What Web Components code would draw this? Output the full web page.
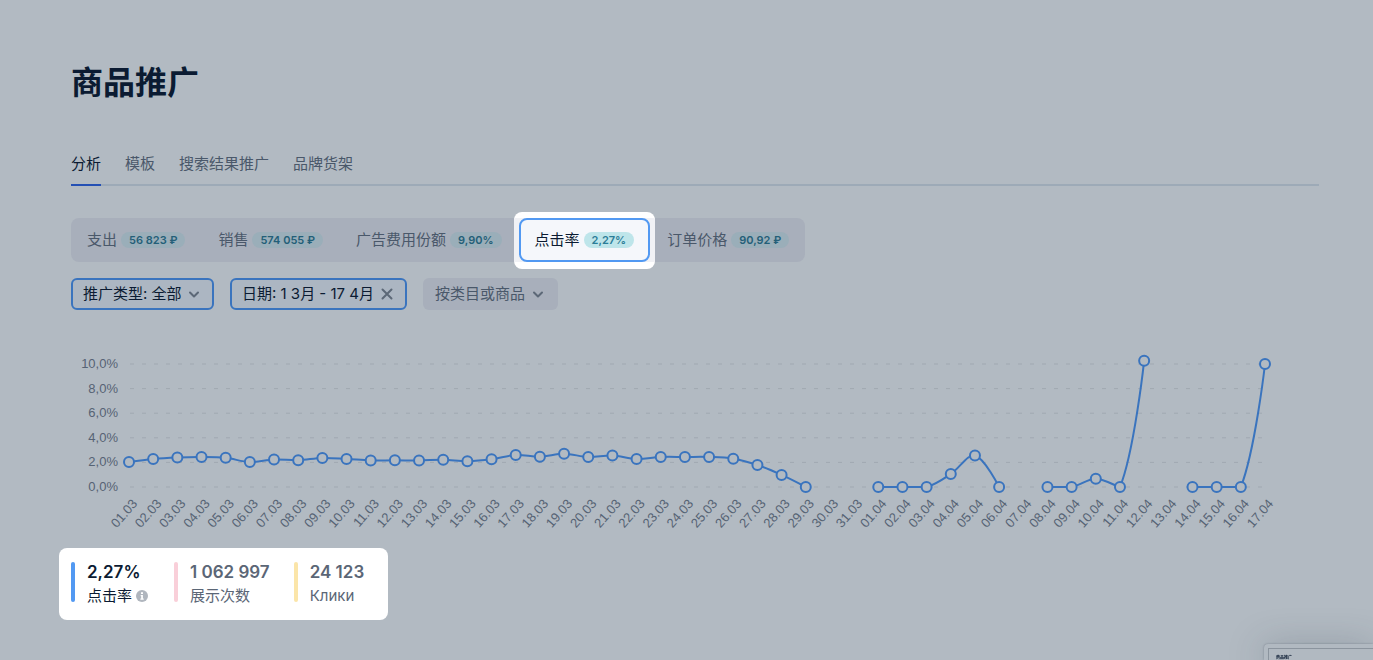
<!DOCTYPE html>
<html lang="zh">
<head>
<meta charset="utf-8">
<meta name="viewport" content="width=device-width, initial-scale=1">
<title>商品推广</title>
<style>
  :root {
    --page: #b2bac2;
    --ink: #0b1b32;
    --muted: #4a586a;
    --panel: #a8afbb;
    --blue: #3a74be;
    --bright: #5299f2;
  }
  html { background: var(--page); }
  body {
    margin: 0;
    background: var(--page);
    color: var(--ink);
    font: 15px/20px Inter, "Noto Sans CJK SC", sans-serif;
  }
</style>
</head>
<body>
<promo-page></promo-page>

<script>
const define = (name, html, setup) => {
  const template = document.createElement('template');
  template.innerHTML = html;
  customElements.define(name, class extends HTMLElement {
    connectedCallback() {
      if (this.shadowRoot) return;
      const root = this.attachShadow({ mode: 'open' });
      root.append(template.content.cloneNode(true));
      if (setup) setup(this, root);
    }
  });
};

define('nav-tab', `
  <style>
    :host { display: block; }
    a { display: block; padding: 0 0 10px; color: var(--muted); text-decoration: none; border-bottom: 2px solid transparent; }
    :host([current]) a { color: var(--ink); border-color: #2450b4; }
  </style>
  <a href="#"><slot></slot></a>
`, (host, root) => {
  if (host.hasAttribute('current')) root.querySelector('a').setAttribute('aria-current', 'page');
});

define('value-badge', `
  <style>
    :host {
      display: block; padding: 0 8px; border-radius: 8px;
      background: var(--badge-bg, #9aaeb9); color: var(--badge-ink, #245f78);
      font-size: 11px; line-height: 16px; font-weight: 600; white-space: nowrap;
    }
  </style>
  <slot></slot>
`);

define('metric-button', `
  <style>
    :host { display: block; position: relative; }
    button {
      display: flex; align-items: center; gap: 4px; box-sizing: border-box;
      height: 44px; padding: 0 14px; border: 2px solid transparent; border-radius: 8px;
      background: none; color: var(--muted); font: inherit; white-space: nowrap;
    }
    :host([active]) {
      --badge-bg: #bee5ea; --badge-ink: #2b7d98;
      isolation: isolate;
    }
    :host([active]) button { background: #f5f7fb; border-color: var(--bright); color: #0b1b32; }
    :host([active])::before, :host([active])::after { content: ""; position: absolute; z-index: -1; }
    :host([active])::before { inset: -6px -5px -7px; border-radius: 8px; background: #fff; }
    :host([active])::after { inset: 0 -5px; background: #f0f1f5; }
  </style>
  <button type="button"><slot></slot><slot name="value"></slot></button>
`, (host, root) => {
  root.querySelector('button').setAttribute('aria-pressed', host.hasAttribute('active'));
});

define('filter-select', `
  <style>
    :host { display: inline-grid; align-items: center; color: var(--muted); }
    :host([selected]) { color: var(--ink); }
    select, svg { grid-area: 1 / 1; }
    select {
      appearance: none; box-sizing: border-box; height: 32px; margin: 0;
      padding: 0 30px 0 10px; border: 2px solid transparent; border-radius: 6px;
      background: var(--panel); color: inherit; font: inherit;
    }
    :host([selected]) select { border-color: var(--blue); background: #acb6c2; }
    svg { justify-self: end; margin-right: 12px; pointer-events: none; }
  </style>
  <select></select>
  <svg width="16" height="16" viewBox="0 0 16 16" fill="none" stroke="#5c6877" stroke-width="2" stroke-linecap="round" stroke-linejoin="round" aria-hidden="true"><path d="M4 6.500l4 4 4-4"/></svg>
`, (host, root) => {
  const select = root.querySelector('select');
  select.setAttribute('aria-label', host.getAttribute('label'));
  select.add(new Option(host.getAttribute('value')));
});

define('filter-chip', `
  <style>
    :host { display: block; }
    button {
      display: flex; align-items: center; gap: 5px; box-sizing: border-box; height: 32px;
      padding: 0 10px; border: 2px solid var(--blue); border-radius: 6px;
      background: #acb6c2; color: var(--ink); font: inherit; white-space: nowrap;
    }
  </style>
  <button type="button"><slot></slot>
    <svg width="16" height="16" viewBox="0 0 16 16" fill="none" stroke="#5c6877" stroke-width="2" stroke-linecap="round" aria-hidden="true"><path d="M3.500 3.500l9 9M12.500 3.500l-9 9"/></svg>
  </button>
`);

/* Daily line chart. Days without data leave a gap in the line. */
const NS = 'http://www.w3.org/2000/svg';
const DAYS = [
  ...Array.from({ length: 31 }, (_, i) => String(i + 1).padStart(2, '0') + '.03'),
  ...Array.from({ length: 17 }, (_, i) => String(i + 1).padStart(2, '0') + '.04')
];
const CTR = [
  2.03, 2.28, 2.4, 2.44, 2.37, 2.03, 2.24, 2.18, 2.36, 2.28, 2.16, 2.17, 2.15, 2.22, 2.1, 2.25,
  2.6, 2.46, 2.7, 2.44, 2.56, 2.28, 2.44, 2.44, 2.44, 2.3, 1.79, 0.98, 0, null, null,
  0, 0, 0, 1.06, 2.56, 0, null, 0, 0, 0.67, 0, 10.27, null, 0, 0, 0, 10
];

/* Bezier path whose tangents follow the neighbours, never dipping below the base line. */
function smoothPath(p, base, tension = 0.35) {
  const dist = (a, b) => Math.hypot(b[0] - a[0], b[1] - a[1]);
  const controls = p.map((q, i) => {
    const prev = p[i - 1], next = p[i + 1];
    if (!prev || !next) return [q, q];
    const before = dist(prev, q), after = dist(q, next);
    const k = tension / (before + after);
    const dx = next[0] - prev[0], dy = next[1] - prev[1];
    return [
      [q[0] - dx * k * before, Math.min(base, q[1] - dy * k * before)],
      [q[0] + dx * k * after, Math.min(base, q[1] + dy * k * after)]
    ];
  });
  return `M${p[0]}` + p.slice(1).map((q, i) => `C${controls[i][1]} ${controls[i + 1][0]} ${q}`).join('');
}

define('ctr-chart', `
  <style>
    :host { display: block; }
    svg { display: block; width: 100%; height: 206px; overflow: visible; }
    text { font: 13px "Liberation Sans", Arial, sans-serif; fill: #566374; text-anchor: end; }
    .grid { stroke: #a0a8b1; stroke-dasharray: 4 8; }
    .line { fill: none; stroke: var(--blue); stroke-width: 2; }
    circle { fill: var(--page); stroke: var(--blue); stroke-width: 2; }
  </style>
  <svg role="img" aria-label="点击率"></svg>
`, (host, root) => {
  const svg = root.querySelector('svg');
  const add = (tag, attrs, text) => {
    const el = document.createElementNS(NS, tag);
    for (const k in attrs) el.setAttribute(k, attrs[k]);
    if (text) el.textContent = text;
    svg.append(el);
  };
  const draw = () => {
    svg.replaceChildren();
    const left = 58, right = host.clientWidth - 54, base = 145, top = 22;
    const x = i => left + (right - left) * i / (DAYS.length - 1);
    const y = v => base - (base - top) * v / 10;
    for (let v = 0; v <= 10; v += 2) {
      add('line', { class: 'grid', x1: left + 1, x2: right, y1: y(v), y2: y(v) });
      add('text', { x: 47, y: y(v) + 4 }, v + ',0%');
    }
    let run = [];
    const points = [];
    [...CTR, null].forEach((v, i) => {
      if (v !== null) { run.push([x(i), y(v)]); return; }
      if (run.length) add('path', { class: 'line', d: smoothPath(run, base) });
      points.push(...run);
      run = [];
    });
    points.forEach(([cx, cy]) => add('circle', { cx, cy, r: 5 }));
    DAYS.forEach((day, i) => add('text', { transform: `translate(${x(i) + 9} 162) rotate(-49)` }, day));
  };
  draw();
  let width = host.clientWidth;
  new ResizeObserver(() => {
    if (host.clientWidth !== width) { width = host.clientWidth; draw(); }
  }).observe(host);
});

define('stat-item', `
  <style>
    :host { display: flex; gap: 12px; color: #5b6676; }
    :host([primary]) { color: #0b1b32; }
    i { width: 4px; height: 40px; border-radius: 2px; background: var(--mark); }
    .value { font-size: 17px; font-weight: 600; line-height: 20px; }
    .label { display: flex; align-items: center; gap: 4px; margin-top: 4px; line-height: 20px; }
  </style>
  <i></i>
  <div><div class="value"><slot name="value"></slot></div><div class="label"><slot></slot></div></div>
`);

define('info-icon', `
  <style>:host { display: block; padding-right: 2px; } svg { display: block; }</style>
  <svg width="12" height="12" viewBox="0 0 12 12" aria-hidden="true"><circle cx="6" cy="6" r="6" fill="#b0b6be"/><path d="M5 2.200h2v1.700H5zM4.700 5h2.200v3.600h.8v1.200H4.400V8.600h.8V6.200h-.5z" fill="#fff"/></svg>
`);

define('page-preview', `
  <style>
    :host {
      display: block; position: fixed; right: 0; bottom: 0; box-sizing: border-box;
      width: 109px; height: 16px; padding: 4px 0 0 4px; overflow: visible;
      border-radius: 4px 0 0 0; background: #b1b9c1;
      box-shadow: 0 0 2px rgba(40, 55, 70, .4), 0 4px 36px rgba(40, 55, 70, .35);
    }
    div {
      box-sizing: border-box; height: 12px; padding: 6px 0 0 7px; overflow: hidden;
      border: solid #8b949e; border-width: 1px 0 0 1px;
      font-size: 4px; line-height: 5px; font-weight: 700;
    }
  </style>
  <div><slot></slot></div>
`);

define('promo-page', `
  <style>
    :host { display: block; padding: 61px 54px 40px 71px; }
    h1 { margin: 0; font-size: 32px; line-height: 44px; font-weight: 700; }
    nav { display: flex; gap: 24px; margin-top: 49px; box-shadow: inset 0 -2px #9daab7; }
    .metrics { display: flex; gap: 1px; width: fit-content; margin-top: 32px; border-radius: 8px; background: var(--panel); }
    .filters { display: flex; gap: 16px; margin-top: 16px; }
    ctr-chart { margin-top: 32px; }
    .stats {
      display: flex; gap: 24px; box-sizing: border-box; width: fit-content;
      margin-left: -12px; padding: 14px 24px 14px 12px; border-radius: 8px; background: #fff;
    }
  </style>
  <h1>商品推广</h1>
  <nav>
    <nav-tab current>分析</nav-tab>
    <nav-tab>模板</nav-tab>
    <nav-tab>搜索结果推广</nav-tab>
    <nav-tab>品牌货架</nav-tab>
  </nav>
  <div class="metrics">
    <metric-button>支出<value-badge slot="value">56 823 ₽</value-badge></metric-button>
    <metric-button>销售<value-badge slot="value">574 055 ₽</value-badge></metric-button>
    <metric-button>广告费用份额<value-badge slot="value">9,90%</value-badge></metric-button>
    <metric-button active>点击率<value-badge slot="value">2,27%</value-badge></metric-button>
    <metric-button>订单价格<value-badge slot="value">90,92 ₽</value-badge></metric-button>
  </div>
  <div class="filters">
    <filter-select selected label="推广类型" value="推广类型: 全部"></filter-select>
    <filter-chip>日期: 1 3月 - 17 4月</filter-chip>
    <filter-select label="类目或商品" value="按类目或商品"></filter-select>
  </div>
  <ctr-chart></ctr-chart>
  <div class="stats">
    <stat-item primary style="--mark: #5299f2"><span slot="value">2,27%</span>点击率<info-icon></info-icon></stat-item>
    <stat-item style="--mark: #f9cfd9"><span slot="value">1 062 997</span>展示次数</stat-item>
    <stat-item style="--mark: #fbe5a9"><span slot="value">24 123</span>Клики</stat-item>
  </div>
  <page-preview>商品推广</page-preview>
`);
</script>
</body>
</html>
